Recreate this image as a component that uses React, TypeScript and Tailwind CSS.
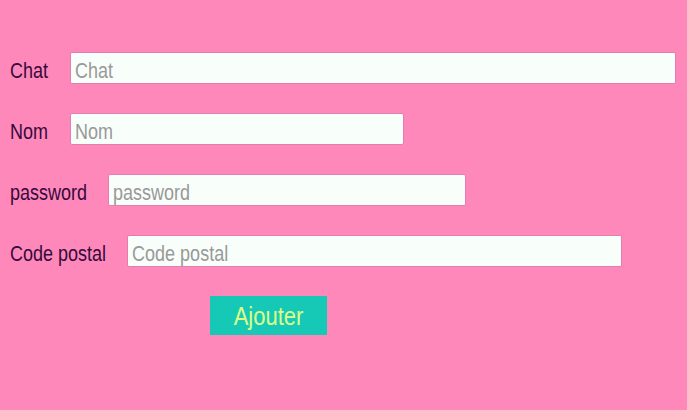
const fields = [
  { label: 'Chat', boxClass: 'ml-[22px] w-[606px]' },
  { label: 'Nom', boxClass: 'ml-[22px] w-[334px]' },
  { label: 'password', boxClass: 'ml-[21px] w-[358px]' },
  { label: 'Code postal', boxClass: 'ml-[21px] w-[495px]' },
];

export default function App() {
  return (
    <div className="min-h-[410px] w-full bg-[#ff88bb] font-['Liberation_Sans',Arial,sans-serif] text-[18px] pt-[52px] pl-[10px]">
      <form className="flex flex-col gap-[29px]" onSubmit={(e) => e.preventDefault()}>
        {fields.map((f) => (
          <div key={f.label} className="flex items-center h-[32px]">
            {/* text in the shot is tall and narrow, so stretch it vertically */}
            <label className="inline-block text-[#360a3c] leading-none translate-y-[3px] scale-y-[1.2]">
              {f.label}
            </label>
            <div className={`${f.boxClass} h-[32px] bg-[#f8fffa] border border-[#e07fb0] rounded-[2px] overflow-hidden`}>
              <input
                type="text"
                placeholder={f.label}
                className="w-full h-full bg-transparent px-[4px] text-[18px] text-[#333] placeholder:text-[#999] outline-none translate-y-[3px] scale-y-[1.2]"
              />
            </div>
          </div>
        ))}
        <div className="pl-[200px]">
          <button
            type="submit"
            className="w-[117px] h-[39px] bg-[#16c9b6] text-[#ddff88] text-[22px] leading-none"
          >
            <span className="inline-block translate-y-[1px] scale-y-[1.2]">Ajouter</span>
          </button>
        </div>
      </form>
    </div>
  );
}
